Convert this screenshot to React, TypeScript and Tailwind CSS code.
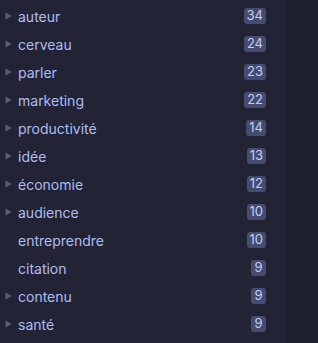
const tags: { name: string; count: number; arrow: boolean }[] = [
  { name: "auteur", count: 34, arrow: true },
  { name: "cerveau", count: 24, arrow: true },
  { name: "parler", count: 23, arrow: true },
  { name: "marketing", count: 22, arrow: true },
  { name: "productivité", count: 14, arrow: true },
  { name: "idée", count: 13, arrow: true },
  { name: "économie", count: 12, arrow: true },
  { name: "audience", count: 10, arrow: true },
  { name: "entreprendre", count: 10, arrow: false },
  { name: "citation", count: 9, arrow: false },
  { name: "contenu", count: 9, arrow: true },
  { name: "santé", count: 9, arrow: true },
];

function Arrow() {
  return (
    <svg width="7" height="8" viewBox="0 0 7 8" className="shrink-0">
      <path d="M0.5 0.5 L6.5 4 L0.5 7.5 Z" fill="#565e82" />
    </svg>
  );
}

export default function App() {
  return (
    <div className="flex h-[343px] w-[318px] bg-[#222436] font-['Inter',sans-serif]">
      <div className="w-[287px] border-r border-[#181a28] pt-[2px]">
        {tags.map((t) => (
          <div key={t.name} className="flex h-[28px] items-center pl-[5px] pr-[20px]">
            <div className="flex w-[13px] items-center">{t.arrow && <Arrow />}</div>
            <span className="flex-1 text-[14px] text-[#aebcf0]">{t.name}</span>
            <span className="flex h-[16px] min-w-[15px] items-center justify-center rounded-[3px] bg-[#454c70] px-[3px] text-[13px] text-[#c5cdf5]">
              {t.count}
            </span>
          </div>
        ))}
      </div>
      <div className="flex-1 bg-[#1f2131]" />
    </div>
  );
}
